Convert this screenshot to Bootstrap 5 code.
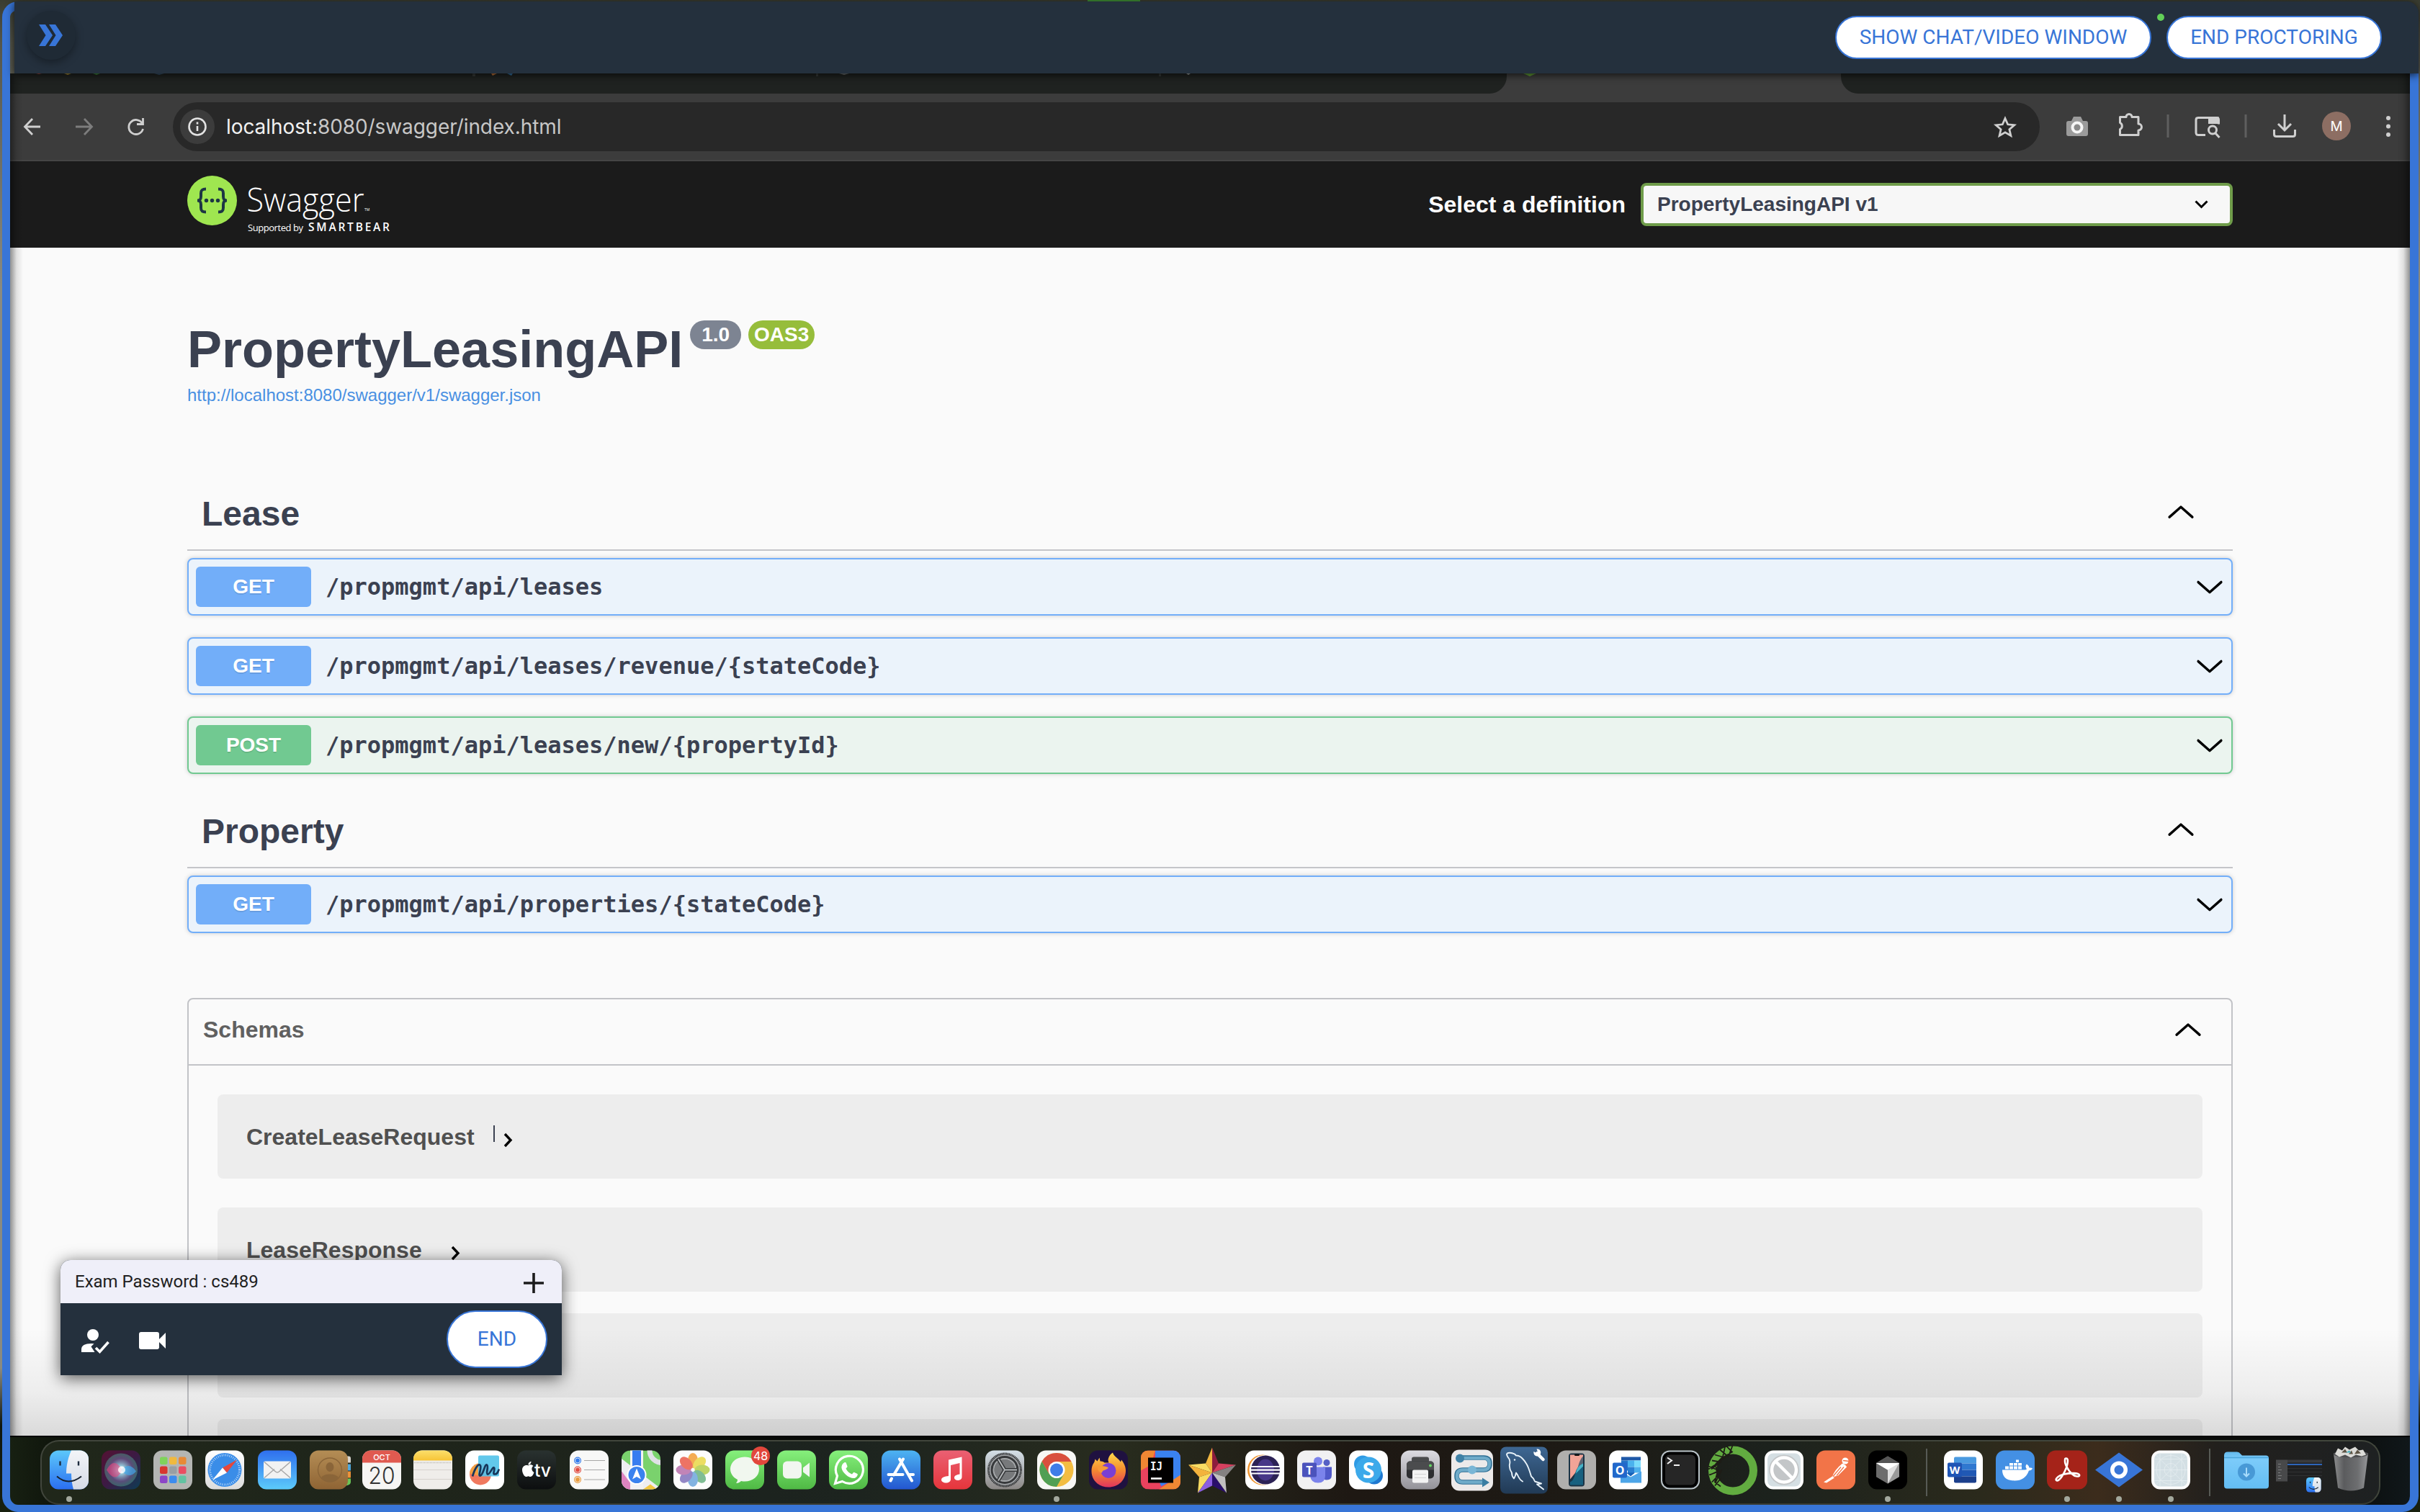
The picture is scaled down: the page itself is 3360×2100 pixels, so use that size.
<!DOCTYPE html>
<html lang="en">
<head>
<meta charset="utf-8">
<title>Swagger UI</title>
<link href="https://cdn.jsdelivr.net/npm/bootstrap@5.3.0/dist/css/bootstrap.min.css" rel="stylesheet">
<style>
body{width:3360px;height:2100px;overflow:hidden;background:#0b0f0a;font-family:"Liberation Sans",Arial,sans-serif;color:#3b4151}
svg{display:block;overflow:visible}
.screen{width:3360px;height:2100px;background:linear-gradient(#3a3d31 0,#55564b 60px,#8a8a80 400px,#8a8a80 1900px,#10160e 1980px,#18200f 2100px)}
.frame{inset:2px 2px 0 3px;border:solid #3875d7;border-width:12px 12px 10px 11px;border-radius:22px;z-index:3;pointer-events:none}
.edge{top:102px;bottom:106px;width:18px;z-index:2}
.edge-l{left:14px;background:linear-gradient(90deg,rgba(0,0,0,.42),rgba(0,0,0,.1) 50%,transparent)}
.edge-r{right:14px;background:linear-gradient(270deg,rgba(0,0,0,.42),rgba(0,0,0,.1) 50%,transparent)}
.proctor{height:100px;margin:2px 2px 0 20px;background:#24303d;border-radius:0 16px 0 0;box-shadow:0 2px 12px rgba(0,0,0,.75);z-index:5;padding:0 51px 0 17px;font-family:Roboto,sans-serif}
.expander{width:68px;height:68px;background:#1f2a35;box-shadow:0 4px 12px rgba(0,0,0,.35);margin-bottom:6px}
.pill{background:#fff;color:#3875d7;border:2px solid #3875d7;border-radius:40px;font:400 28px/54px Roboto,sans-serif;height:60px;text-align:center;white-space:nowrap;padding:0}
.camlight{width:10px;height:10px;background:#62d058;top:17px;left:2975px}
.browser{margin:0 14px}
.tabs{height:28px;background:#3c3c3c}
.tabs .off{background:#1f2220}
.toolbar{height:94px;background:#3c3c3c;border-bottom:2px solid #454545;font-family:Inter,sans-serif}
.omni{margin-left:38px;width:2592px;height:68px;border-radius:34px;background:#282828;padding:0 32px 0 10px}
.site{width:48px;height:48px;background:#3c3c3c}
.url{font-size:28px;color:#c7c7c7;margin-left:16px;white-space:nowrap;letter-spacing:-.08px}
.url b{font-weight:400;color:#f1f1f1}
.topbar{height:120px;background:#1b1b1b;padding:0 246px}
.topbar label{font-size:32px;font-weight:700;color:#fff;white-space:nowrap}
.defsel{width:822px;height:60px;border:4px solid #6f9c4a;border-radius:8px;background:#f7f7f7;font-size:28px;font-weight:700;padding:0 30px 0 19px;color:#3b4151}
.page{height:1650px;overflow:hidden;background:#fafafa;padding:105px 246px 0}
.page::after{content:"";position:absolute;left:0;right:0;bottom:0;height:150px;background:linear-gradient(transparent,rgba(0,0,0,.05) 60%,rgba(0,0,0,.13))}
h1{font-size:72px;line-height:72px;font-weight:700;margin:0}
.ver{height:40px;border-radius:57px;color:#fff;font-size:28px;line-height:40px;font-weight:700;text-align:center;margin-top:-4px}
.spec{font-size:24px;line-height:28px;color:#4990e2;margin-top:14px;text-decoration:none}
.taghead{height:100px;border-bottom:2px solid #c4c5c9;padding:0 54px 0 20px;margin-bottom:10px}
.taghead h2{font-size:48px;line-height:48px;font-weight:700;margin:0}
.op{height:80px;border:2px solid #72aef9;border-radius:8px;background:#ebf3fb;box-shadow:0 0 6px rgba(0,0,0,.19);padding:0 12px 0 10px;margin-bottom:30px}
.op .verb{width:160px;height:56px;border-radius:6px;background:#72aef9;color:#fff;font-size:28px;line-height:56px;font-weight:700;text-align:center;text-shadow:0 2px 0 rgba(0,0,0,.1)}
.op .path{font:700 32px/40px "DejaVu Sans Mono",monospace;margin-left:20px;color:#3b4151}
.op.post{border-color:#71c991;background:#ebf4ef}.op.post .verb{background:#71c991}
.schemas{margin-top:90px;border:2px solid #c2c3c7;border-radius:8px;height:900px}
.schemas .sh{height:92px;border-bottom:2px solid #c2c3c7;padding:0 42px 7px 20px;font-size:32px;font-weight:700;color:#606060}
.model{height:117px;margin:0 40px 30px;background:#ededed;border-radius:8px;padding:0 40px;font-size:32px;font-weight:700;color:#505050}
.panel{left:84px;top:1750px;width:696px;height:160px;border-radius:14px 14px 0 0;background:#24303d;box-shadow:0 4px 22px rgba(0,0,0,.65);z-index:6;overflow:visible;font-family:Roboto,sans-serif}
.panel .ph{height:60px;background:#efeff9;border-radius:14px 14px 0 0;font-size:24px;color:#212121;padding:0 25px 0 20px}
.endb{width:140px;height:80px;line-height:76px}
.dockarea{height:96px;margin:0 14px;background:linear-gradient(90deg,#172012,#0a0e08 3%,#050705 50%,#0a0c0a 97%,#10171a);padding:4px 41px 0 42px;border-top:2px solid #050605}
.dock{height:90px;border:2px solid #41463c;border-bottom-color:#393c33;border-radius:26px;background:linear-gradient(90deg,#20271a,#1e241b 22%,#1b221e 27%,#1d241f 35%,#282c1e 46%,#1e1813 56%,#1d1a15 66%,#1c221d 74%,#2b2a1c 83%,#3c2c1c 88%,#22201d 93%,#1e2122);padding-left:2px}
.dk{width:72.17px;height:86px;padding:12px 9px 0}
.dk svg{width:54px;height:55px}
.on::after{content:"";width:8px;height:8px;border-radius:50%;background:#a3a89d;position:absolute;left:32px;top:76px}
.sep{width:2px;height:66px;background:#575a55;margin-top:10px}
.cnt{left:45px;top:7px;width:26px;height:26px;line-height:26px;background:#e2473c;font-size:16px;color:#fff;font-family:Inter,sans-serif;text-align:center}
.greenbit{left:1510px;top:0;width:73px;height:2px;background:#3f8f35}
</style>
<script src="https://cdn.jsdelivr.net/npm/bootstrap@5.3.0/dist/js/bootstrap.bundle.min.js"></script>
</head>
<body>
<svg width="0" height="0" class="position-absolute" aria-hidden="true"><defs>
<path id="up" d="M2 17 18 4.500l16 12.500" fill="none" stroke="#000" stroke-width="3.200" stroke-linecap="round" stroke-linejoin="round" transform="translate(0 -2) scale(1 1.130)"/>
<path id="dn" d="M2 4 18 16.500 34 4" fill="none" stroke="#000" stroke-width="3.200" stroke-linecap="round" stroke-linejoin="round" transform="translate(0 -1) scale(1 1.130)"/>
<linearGradient id="gSky" x2="0" y2="1"><stop stop-color="#5cc8fb"/><stop offset="1" stop-color="#2b6ff0"/></linearGradient>
<linearGradient id="gFace" x2="0" y2="1"><stop stop-color="#f3f5f8"/><stop offset="1" stop-color="#d5dbe6"/></linearGradient>
<linearGradient id="gMail" x2="0" y2="1"><stop stop-color="#2f6fee"/><stop offset="1" stop-color="#5ccbfb"/></linearGradient>
<linearGradient id="gGreen" x2="0" y2="1"><stop stop-color="#86f07c"/><stop offset="1" stop-color="#4fb944"/></linearGradient>
<linearGradient id="gStore" x2="0" y2="1"><stop stop-color="#4db4f2"/><stop offset="1" stop-color="#2356d0"/></linearGradient>
<linearGradient id="gRed" x2="0" y2="1"><stop stop-color="#ea6073"/><stop offset="1" stop-color="#e6353b"/></linearGradient>
<linearGradient id="gGrey" x2="0" y2="1"><stop stop-color="#d5e0e8"/><stop offset="1" stop-color="#8b8785"/></linearGradient>
<linearGradient id="gWhite" x2="0" y2="1"><stop stop-color="#fff"/><stop offset="1" stop-color="#dcdcdc"/></linearGradient>
<linearGradient id="gYel" x2="0" y2="1"><stop stop-color="#fbdf6b"/><stop offset="1" stop-color="#f7c436"/></linearGradient>
<linearGradient id="gTv" x2="0" y2="1"><stop stop-color="#2a3230"/><stop offset="1" stop-color="#0c0e0f"/></linearGradient>
<linearGradient id="gTan" x2="0" y2="1"><stop stop-color="#b48d55"/><stop offset="1" stop-color="#8f6434"/></linearGradient>
<linearGradient id="gMy" x2="0" y2="1"><stop stop-color="#3e6793"/><stop offset="1" stop-color="#213a55"/></linearGradient>
<linearGradient id="gPrn" x2="0" y2="1"><stop stop-color="#dddce2"/><stop offset="1" stop-color="#939298"/></linearGradient>
<linearGradient id="gFold" x2="0" y2="1"><stop stop-color="#63b9ec"/><stop offset=".2" stop-color="#7ccbfa"/><stop offset="1" stop-color="#63bdf3"/></linearGradient>
<linearGradient id="gTrash" x2="1"><stop stop-color="#8d8e8f"/><stop offset=".3" stop-color="#5b5c5e"/><stop offset=".7" stop-color="#6d6e70"/><stop offset="1" stop-color="#97989a"/></linearGradient>
<linearGradient id="gFox" x2="0" y2="1"><stop stop-color="#ffd94a"/><stop offset=".5" stop-color="#f58b2f"/><stop offset="1" stop-color="#e0355d"/></linearGradient>
<linearGradient id="gSiri" x2="1" y2="1"><stop stop-color="#541233"/><stop offset=".5" stop-color="#3c1a44"/><stop offset="1" stop-color="#0d3d55"/></linearGradient>
<radialGradient id="gOrb"><stop stop-color="#fff"/><stop offset=".25" stop-color="#9dd9e8" stop-opacity=".9"/><stop offset=".7" stop-color="#6b5d8e" stop-opacity=".7"/><stop offset="1" stop-color="#4a9585" stop-opacity=".55"/></radialGradient>
</defs></svg>

<div class="screen position-relative overflow-hidden d-flex flex-column">
  <div class="frame position-absolute"></div>
  <div class="edge edge-l position-absolute"></div><div class="edge edge-r position-absolute"></div>
  <div class="greenbit position-absolute"></div>

  <header class="proctor position-relative d-flex align-items-center flex-shrink-0">
    <div class="expander rounded-circle d-flex align-items-center justify-content-center">
      <svg width="34" height="30" viewBox="0 0 34 30" fill="#3875d7"><path d="M0 0h9l10 15L9 30H0l9.500-15z"/><path d="M14 0h9l10 15-10 15h-9l9.500-15z"/></svg>
    </div>
    <button class="pill ms-auto" style="width:439px">SHOW CHAT/VIDEO WINDOW</button>
    <span class="camlight rounded-circle position-absolute"></span>
    <button class="pill" style="width:299px;margin-left:21px">END PROCTORING</button>
  </header>

  <main class="browser flex-shrink-0">
    <div class="tabs d-flex">
      <div class="off" style="width:2078px;border-radius:0 0 24px 0"><svg width="2078" height="28"><path d="M36 0h8l-4 1z" fill="#b5453c"/><path d="M75 0h10l-5 2z" fill="#a98a2e"/><path d="M115 0h10l-5 2z" fill="#3d8a38"/><path d="M200 0h14l-7 2z" fill="#36506a"/><path d="M642 0h4v4h-4zM1119 0h3v4h-3zM1595 0h3v4h-3z" fill="#363938"/><path d="M668 0h8l-6 3z" fill="#c07134"/><path d="M690 0h8l-2 3z" fill="#3473a5"/><path d="M1151 0h14l-7 2z" fill="#6d7071"/><path d="M1633 0h6l-3 2z" fill="#a5a8a6"/></svg></div>
      <div style="width:464px"><svg width="464" height="28"><path d="M23 0h18l-9 4z" fill="#5f9a35"/></svg></div>
      <div class="off flex-grow-1" style="border-radius:0 0 0 24px"></div>
    </div>
    <nav class="toolbar d-flex align-items-center">
      <svg width="170" height="28" viewBox="0 0 170 28" fill="none" stroke="#cfcfcf" stroke-width="2.800" style="margin-left:18px"><path d="M13 3 2.500 14 13 25M3 14h21"/><path d="M85 3l10.500 11L85 25M95 14H73" stroke="#7d7d7d"/><path d="M165.500 9.500A10 10 0 1 0 166.500 17M166.500 2v8.500h-8.500"/></svg>
      <div class="omni d-flex align-items-center">
        <span class="site rounded-circle d-flex align-items-center justify-content-center"><svg width="26" height="26" fill="none" stroke="#e3e3e3" stroke-width="2.600"><circle cx="13" cy="13" r="11.500"/><path d="M13 12v7M13 6.500v3"/></svg></span>
        <span class="url"><b>localhost:</b>8080/swagger/index.html</span>
        <svg class="ms-auto" width="32" height="30" viewBox="0 0 32 30" fill="none" stroke="#cfcfcf" stroke-width="2.800"><path d="M16 3.500l3.700 8.300 9 .9-6.800 6 2 8.800-7.900-4.700-7.900 4.700 2-8.800-6.800-6 9-.9z"/></svg>
      </div>
      <svg width="460" height="44" viewBox="2848 155 460 44" style="margin-left:16px" fill="none" stroke="#cfcfcf" stroke-width="3">
        <g stroke="none"><path d="M2879 163h10l3 6h4q3 0 3 3v15q0 3-3 3h-24q-3 0-3-3v-15q0-3 3-3h4z" fill="#9b9b9b"/><circle cx="2884" cy="178" r="8.500" fill="#f5f5f5"/><circle cx="2884" cy="178" r="4.500" fill="#8a8a8a"/></g>
        <path d="M2943.500 163.500h8.500a4 4 0 0 1 8 0h9v9.500a4.500 4.500 0 0 1 0 9v6.500h-25.500v-8a5 5 0 0 0 0-9z" stroke-linejoin="round"/>
        <path d="M3010 160v32M3118 160v32" stroke="#5f5f5f"/>
        <path d="M3062 188.500h-10q-3 0-3-3v-18q0-3 3-3h26q2.500 0 2.500 3v6"/><path d="M3066 163.500h15v9.500h-15z" fill="#cfcfcf" stroke="none"/><circle cx="3072" cy="181.500" r="5.500"/><path d="M3076 186l5.500 6"/>
        <path d="M3172 160v21M3163 173l9 9 9-9M3157.500 181v6.500q0 3 3 3h23q3 0 3-3v-6.500"/>
        <circle cx="3244" cy="176" r="20" fill="#8d6e63" stroke="none"/><text x="3244" y="183" font-size="19" fill="#fff" stroke="none" text-anchor="middle">M</text>
      </svg>
      <svg width="6" height="30" style="margin-left:5px" fill="#cfcfcf"><circle cx="3" cy="3" r="3"/><circle cx="3" cy="14.500" r="3"/><circle cx="3" cy="26" r="3"/></svg>
    </nav>

    <div class="topbar d-flex align-items-center">
      <svg width="284" height="80" viewBox="260 244 284 80" style="font-family:'Open Sans',sans-serif" fill="#fff">
        <circle cx="294.500" cy="278.500" r="34.500" fill="#9fe650"/>
        <g fill="none" stroke="#1d3644" stroke-width="4"><path d="M286 262.500c-6 0-7 2-7 6v4c0 4-1 6-5 6 4 0 5 2 5 6v4c0 4 1 6 7 6M303 262.500c6 0 7 2 7 6v4c0 4 1 6 5 6-4 0-5 2-5 6v4c0 4-1 6-7 6"/></g>
        <g fill="#1d3644"><circle cx="286.500" cy="278.500" r="2.700"/><circle cx="294.500" cy="278.500" r="2.700"/><circle cx="302.500" cy="278.500" r="2.700"/></g>
        <text x="342.500" y="293.500" font-size="46" font-weight="300" textLength="163" lengthAdjust="spacingAndGlyphs">Swagger</text>
        <text x="506" y="293" font-size="5">TM</text>
        <text x="344" y="321" font-size="13" textLength="77">Supported by</text>
        <text x="428" y="321" font-size="15.500" font-weight="600" textLength="113">SMARTBEAR</text>
      </svg>
      <label class="ms-auto" style="margin-right:21px">Select a definition</label>
      <div class="defsel d-flex align-items-center justify-content-between"><span>PropertyLeasingAPI v1</span>
        <svg width="19" height="12" fill="none" stroke="#000" stroke-width="3"><path d="M1.500 1.500l8 8 8-8"/></svg></div>
    </div>

    <div class="page position-relative">
      <div class="d-flex align-items-start"><h1>PropertyLeasingAPI</h1><span class="ver" style="width:71px;background:#7d8492;margin-left:10px">1.0</span><span class="ver" style="width:92px;background:#96bd3b;margin-left:10px">OAS3</span></div>
      <a class="spec d-block">http://localhost:8080/swagger/v1/swagger.json</a>

      <section style="margin-top:102px">
        <div class="taghead d-flex align-items-center justify-content-between"><h2>Lease</h2><svg width="36" height="20" style="margin-top:-6px"><use href="#up"/></svg></div>
        <div class="op d-flex align-items-center"><span class="verb">GET</span><span class="path">/propmgmt/api/leases</span><svg class="ms-auto" width="36" height="20"><use href="#dn"/></svg></div>
        <div class="op d-flex align-items-center"><span class="verb">GET</span><span class="path">/propmgmt/api/leases/revenue/{stateCode}</span><svg class="ms-auto" width="36" height="20"><use href="#dn"/></svg></div>
        <div class="op post d-flex align-items-center"><span class="verb">POST</span><span class="path">/propmgmt/api/leases/new/{propertyId}</span><svg class="ms-auto" width="36" height="20"><use href="#dn"/></svg></div>
      </section>
      <section style="margin-top:31px">
        <div class="taghead d-flex align-items-center justify-content-between"><h2>Property</h2><svg width="36" height="20" style="margin-top:-6px"><use href="#up"/></svg></div>
        <div class="op d-flex align-items-center"><span class="verb">GET</span><span class="path">/propmgmt/api/properties/{stateCode}</span><svg class="ms-auto" width="36" height="20"><use href="#dn"/></svg></div>
      </section>
      <section class="schemas">
        <div class="sh d-flex align-items-center justify-content-between"><span>Schemas</span><svg width="36" height="20"><use href="#up"/></svg></div>
        <div class="model d-flex align-items-center" style="margin-top:40px;margin-bottom:40px"><span>CreateLeaseRequest</span>
          <svg width="30" height="32" style="margin-left:25px" fill="none"><path d="M2 0v23" stroke="#3b4151" stroke-width="2"/><path d="M17 12l8 8.500-8 8.500" stroke="#000" stroke-width="3.400"/></svg></div>
        <div class="model d-flex align-items-center"><span>LeaseResponse</span>
          <svg width="30" height="32" style="margin-left:25px" fill="none"><path d="M17 12l8 8.500-8 8.500" stroke="#000" stroke-width="3.400"/></svg></div>
        <div class="model"></div>
        <div class="model"></div>
      </section>
    </div>
  </main>

  <aside class="panel position-absolute">
    <div class="ph d-flex align-items-center justify-content-between"><span>Exam Password : cs489</span><svg width="28" height="28" stroke="#1c1c1c" stroke-width="3.600" class="mt-1"><path d="M14 0v28M0 14h28"/></svg></div>
    <div class="d-flex align-items-center" style="height:100px;padding:0 20px 0 29px">
      <svg width="39" height="33" viewBox="0 0 39 33" fill="#fff" style="margin-top:4px"><circle cx="16" cy="8" r="8"/><path d="M0 32v-4q0-8 14-8 2 0 3.500.3l-4 4 5 7.700z"/><path d="M20 26l5.500 5.500L37.500 18" fill="none" stroke="#fff" stroke-width="3.600"/></svg>
      <svg width="38" height="24" viewBox="0 0 38 24" fill="#fff" style="margin-left:41px;margin-top:4px"><rect width="28" height="24" rx="3"/><path d="M28 10l9-9v22l-9-9z"/></svg>
      <button class="pill endb ms-auto">END</button>
    </div>
  </aside>

  <footer class="dockarea flex-shrink-0"><div class="dock d-flex">
    <div class="dk position-relative on"><svg viewBox="0 0 54 54"><rect width="54" height="54" rx="12" fill="url(#gSky)"/><path d="M30 0c-5 11-7 22-7 32h7c0 8 1 15 3 22h9a12 12 0 0 0 12-12V12A12 12 0 0 0 42 0z" fill="url(#gFace)"/><path d="M14.500 15v6M40 15v6" stroke="#1d2b3e" stroke-width="2.400"/><path d="M10 36q16 14 34 0" fill="none" stroke="#17222f" stroke-width="2"/></svg></div>
    <div class="dk"><svg viewBox="0 0 54 54"><rect width="54" height="54" rx="12" fill="url(#gSiri)"/><circle cx="27" cy="27" r="23" fill="url(#gOrb)"/><path d="M7 27q10-19 22 0-10 20-22 0" fill="#e8467e" opacity=".6"/><path d="M27 27q12-12 21 2-10 12-21-2" fill="#42a7e8" opacity=".7"/><circle cx="28" cy="27" r="5" fill="#fff" opacity=".8"/></svg></div>
    <div class="dk"><svg viewBox="0 0 54 54"><rect width="54" height="54" rx="12" fill="#b4b6b3"/><g><rect x="9" y="9" width="10.500" height="10.500" rx="2.500" fill="#7fd35b"/><rect x="22" y="9" width="10.500" height="10.500" rx="2.500" fill="#f0b93e"/><rect x="35" y="9" width="10.500" height="10.500" rx="2.500" fill="#e88a35"/><rect x="9" y="22" width="10.500" height="10.500" rx="2.500" fill="#d8362f"/><rect x="22" y="22" width="10.500" height="10.500" rx="2.500" fill="#999fa3"/><rect x="35" y="22" width="10.500" height="10.500" rx="2.500" fill="#ea4d62"/><rect x="9" y="35" width="10.500" height="10.500" rx="2.500" fill="#8c46c7"/><rect x="22" y="35" width="10.500" height="10.500" rx="2.500" fill="#3c8ced"/><rect x="35" y="35" width="10.500" height="10.500" rx="2.500" fill="#62c3a2"/></g></svg></div>
    <div class="dk"><svg viewBox="0 0 54 54"><rect width="54" height="54" rx="12" fill="url(#gWhite)"/><circle cx="27" cy="27" r="23.500" fill="#3a8de8"/><circle cx="27" cy="27" r="20.500" fill="none" stroke="#cfe4fa" stroke-width="3" stroke-dasharray=".8 1.900"/><path d="M44 13 30 31l-6-7z" fill="#e5473b"/><path d="M10 41l14-17 6 7z" fill="#fff"/></svg></div>
    <div class="dk"><svg viewBox="0 0 54 54"><rect width="54" height="54" rx="12" fill="url(#gMail)"/><rect x="8" y="15" width="38" height="24" rx="2" fill="#f2f2f2"/><path d="M9 38l14-12M45 38 31 26M9 16l15 13q3 3 6 0l15-13" fill="none" stroke="#a8a8a8" stroke-width="1.500"/></svg></div>
    <div class="dk"><svg viewBox="0 0 54 54"><path d="M50 8h4q3 0 3 3v6h-7z" fill="#d7d4cd"/><path d="M50 19h7v9h-7z" fill="#50a8dc"/><path d="M50 29h7v9h-7z" fill="#eb9138"/><path d="M50 39h7v5q0 4-7 5z" fill="#69c455"/><rect width="53" height="54" rx="12" fill="url(#gTan)"/><circle cx="28" cy="27" r="16.500" fill="none" stroke="#8a6539" stroke-width="1.500"/><ellipse cx="28" cy="23" rx="5.500" ry="6.500" fill="#8a6539"/><path d="M16 38q3-5 12-5t12 5q-12 11-24 0z" fill="#8a6539"/></svg></div>
    <div class="dk"><svg viewBox="0 0 54 54" style="margin-left:1px"><rect width="54" height="54" rx="12" fill="#f6f5f3"/><path d="M0 17v-5A12 12 0 0 1 12 0h30a12 12 0 0 1 12 12v5z" fill="#e05a50"/><text x="27" y="13" font-family="Inter" font-size="11" font-weight="500" fill="#fff" text-anchor="middle">OCT</text><text x="27" y="46" font-family="Inter" font-size="33" font-weight="300" fill="#333" text-anchor="middle" textLength="37" lengthAdjust="spacingAndGlyphs">20</text></svg></div>
    <div class="dk"><svg viewBox="0 0 54 54"><rect width="54" height="54" rx="12" fill="#efedea"/><path d="M0 14v-2A12 12 0 0 1 12 0h30a12 12 0 0 1 12 12v2z" fill="url(#gYel)"/><path d="M1 17h52" stroke="#bdbab4" stroke-width="1.500" stroke-dasharray="1 1"/><path d="M0 27h54M0 40h54" stroke="#d5d2cd" stroke-width="1.200"/></svg></div>
    <div class="dk"><svg viewBox="0 0 54 54"><rect width="54" height="54" rx="12" fill="#fff"/><circle cx="21" cy="33" r="15" fill="#f0795f"/><path d="M6 32a15 15 0 0 1 12-14l4 18z" fill="#f3a044"/><rect x="18" y="7" width="29" height="29" rx="2" fill="#56c4ea" opacity=".93"/><path d="M10 36c4-13 9-19 11-15s-4 15 0 14 6-17 9-15-2 12 1 13 7-11 9-9-3 9 1 9 4-3 6-7" fill="none" stroke="#17365a" stroke-width="2.700"/></svg></div>
    <div class="dk"><svg viewBox="0 0 54 54"><rect width="54" height="54" rx="12" fill="url(#gTv)"/><path d="M15.500 21c2-2 5-1.500 7 .5-3 2-3 7 1 9-1 3-3 6-5 6-1.300 0-2-.8-3-.8s-2 .8-3 .8c-3 0-5.500-6-5.500-9.500 0-5 4.500-7.500 8.500-6zM15.500 20c-.3-2.500 1.700-4.500 4-4.800.2 2.600-1.700 4.800-4 4.800z" fill="#fff"/><text x="24" y="36" font-family="Inter" font-size="25" font-weight="500" fill="#fff" textLength="23" lengthAdjust="spacingAndGlyphs">tv</text></svg></div>
    <div class="dk"><svg viewBox="0 0 54 54"><rect width="54" height="54" rx="12" fill="#f8f8f7"/><g stroke="#a7a7a7" stroke-width="1.200"><path d="M20 14h29M20 27h29M20 40.500h29"/></g><g fill="none" stroke-width="1.200"><circle cx="11" cy="14" r="4.400" stroke="#347cec"/><circle cx="11" cy="27" r="4.400" stroke="#e24b40"/><circle cx="11" cy="40.500" r="4.400" stroke="#e89a3c"/></g><circle cx="11" cy="14" r="2.900" fill="#347cec"/><circle cx="11" cy="27" r="2.900" fill="#e24b40"/><circle cx="11" cy="40.500" r="2.900" fill="#e89a3c"/></svg></div>

    <div class="dk"><svg viewBox="0 0 54 54"><clipPath id="cMap"><rect width="54" height="54" rx="12"/></clipPath><g clip-path="url(#cMap)"><rect width="54" height="54" fill="#7ad26d"/><path d="M-2 10l58 44v8H-2z" fill="#eeeef1"/><path d="M-2 26l22 30H-2z" fill="#dd84c0"/><path d="M30 54l10-7 12 9H28z" fill="#f2c63e"/><path d="M12-2h18v60H12z" fill="#f2f2f4"/><path d="M15-2h12v30H15z" fill="#377cf0"/><circle cx="56" cy="0" r="17" fill="none" stroke="#dfe1e6" stroke-width="7"/></g><circle cx="21" cy="34" r="13.500" fill="#fff"/><circle cx="21" cy="34" r="11.500" fill="#3a82ef"/><path d="M21 25l6 15-6-3.500-6 3.500z" fill="#fff"/></svg></div>
    <div class="dk"><svg viewBox="0 0 54 54"><rect width="54" height="54" rx="12" fill="#fcfcfc"/><g opacity=".88"><ellipse cx="27" cy="14" rx="7" ry="10.500" fill="#f3a13c"/><ellipse cx="27" cy="14" rx="7" ry="10.500" fill="#ead94d" transform="rotate(45 27 27)"/><ellipse cx="27" cy="14" rx="7" ry="10.500" fill="#b6cf52" transform="rotate(90 27 27)"/><ellipse cx="27" cy="14" rx="7" ry="10.500" fill="#6fb586" transform="rotate(135 27 27)"/><ellipse cx="27" cy="14" rx="7" ry="10.500" fill="#72a9de" transform="rotate(180 27 27)"/><ellipse cx="27" cy="14" rx="7" ry="10.500" fill="#8577bf" transform="rotate(225 27 27)"/><ellipse cx="27" cy="14" rx="7" ry="10.500" fill="#ba74ae" transform="rotate(270 27 27)"/><ellipse cx="27" cy="14" rx="7" ry="10.500" fill="#ec6150" transform="rotate(315 27 27)"/></g></svg></div>
    <div class="dk position-relative"><svg viewBox="0 0 54 54"><rect width="54" height="54" rx="12" fill="url(#gGreen)"/><path d="M27 9c11 0 20 7 20 17s-9 17-20 17c-2 0-3 0-5-.5-2 2-4 3-7 3 1-1.500 2-3 2-5C11 37.500 7 32 7 26 7 16 16 9 27 9z" fill="#f1f7ef"/></svg><span class="cnt position-absolute rounded-circle">48</span></div>
    <div class="dk"><svg viewBox="0 0 54 54"><rect width="54" height="54" rx="12" fill="url(#gGreen)"/><rect x="8" y="15" width="26" height="24" rx="6" fill="#f1f6f0"/><path d="M36 24l9-7v20l-9-7z" fill="#f1f6f0"/></svg></div>
    <div class="dk"><svg viewBox="0 0 54 54"><rect width="54" height="54" rx="12" fill="url(#gGreen)"/><path d="M8.500 46l3-10.500a19 19 0 1 1 7 7.500z" fill="none" stroke="#fff" stroke-width="3.200"/><path d="M21 17c1.500-.8 2.500-.3 3 1l1.500 4c.3 1-1.500 2.500-2 3.200 2 4 5 6.500 8.500 7.800.8-.8 2.200-3 3.200-2.600l4.300 2c1 .8-.2 5-4 6-6 1.500-17-7-18-14-.4-3 1.500-6.500 3.500-7.400z" fill="#fff"/></svg></div>
    <div class="dk"><svg viewBox="0 0 54 54"><rect width="54" height="54" rx="12" fill="url(#gStore)"/><g stroke="#fff" stroke-width="4" stroke-linecap="round"><path d="M30 12 17 34M25 12l17 30M9.500 33.500h20M38 33.500h6M14 39l-1.500 3"/></g></svg></div>
    <div class="dk"><svg viewBox="0 0 54 54"><rect width="54" height="54" rx="12" fill="url(#gRed)"/><path d="M21 13l18.500-4v28c0 3-3 4.500-5.500 4.500S29 40 29 38c0-3.500 4-4.500 7.500-5V17.500l-12.500 3V40c0 3.500-3 5-6.500 5S11 43 11 41c0-4 5-5 10-5.500z" fill="#fff"/></svg></div>
    <div class="dk"><svg viewBox="0 0 54 54"><rect width="54" height="54" rx="12" fill="url(#gGrey)"/><circle cx="27" cy="27" r="22.500" fill="#a4a7aa" stroke="#303234" stroke-width="3" stroke-dasharray="1.400 .7"/><circle cx="27" cy="27" r="17" fill="#77797b" stroke="#37393b" stroke-width="5"/><circle cx="27" cy="27" r="15.500" fill="none" stroke="#a7aaac" stroke-width="2"/><path d="M27 27h17M27 27l-9 15M27 27l-9-15" stroke="#323436" stroke-width="5"/><path d="M27 27h17M27 27l-9 15M27 27l-9-15" stroke="#b4b7b9" stroke-width="2"/></svg></div>
    <div class="dk position-relative on"><svg viewBox="0 0 54 54"><rect width="54" height="54" rx="12" fill="#f7f7f5"/><circle cx="27" cy="27" r="23.500" fill="#f3bd42"/><path d="M27 27 6.700 15.200A23.500 23.500 0 0 1 47.500 15.500H27z" fill="#d94f3e"/><path d="M6.700 15.200A23.500 23.500 0 0 0 27 50.500L37 33 27 27l-10 6z" fill="#519f54"/><path d="M6.700 15.200 17 33l10-6V15.500z" fill="#d94f3e"/><circle cx="27" cy="27" r="11.500" fill="#fff"/><circle cx="27" cy="27" r="9" fill="#3e7de8"/></svg></div>
    <div class="dk"><svg viewBox="0 0 54 54"><rect width="54" height="54" rx="12" fill="#1f1140"/><path d="M33 3c1 5 8 8 11 13l1-3c4 5 6 10 6 15 0 13-10 23-24 23S3.500 41 3.500 29c0-7 2-10 4-13l1-4 3 3 3-5 1 5c1 0 4 0 6 2h6l-1-3c0-4 3-9 6.500-11z" fill="url(#gFox)"/><circle cx="27" cy="28" r="10.500" fill="#7a3fd4"/><path d="M12 22c6-1 12 0 15 2-3 4-8 2-9 7-5-1-7-5-6-9z" fill="#f79a38"/></svg></div>
    <div class="dk"><svg viewBox="0 0 54 54"><clipPath id="cIj"><rect width="55" height="54" rx="10"/></clipPath><g clip-path="url(#cIj)"><rect width="55" height="54" fill="#e9425e"/><path d="M20 0h35v36L20 54z" fill="#3a82f0"/><path d="M0 0h20l-6 20L0 28z" fill="#f08733"/><path d="M14 16l16 38H12z" fill="#e9425e"/><path d="M55 34v20H25z" fill="#f08733"/></g><rect x="10" y="10" width="35" height="35" fill="#000"/><text x="13" y="27" font-family="DejaVu Sans Mono" font-size="16" font-weight="700" fill="#fff" textLength="17" lengthAdjust="spacingAndGlyphs">IJ</text><path d="M14 39h15" stroke="#fff" stroke-width="2.600"/></svg></div>
    <div class="dk"><svg viewBox="0 0 54 54"><path d="M27-4 18 18l9 13z" fill="#f3b840"/><path d="M27-4l9 22-9 13z" fill="#8d1d3d"/><path d="M-6 20l24-2 9 13z" fill="#f9dc63"/><path d="M60 20l-24-2-9 13z" fill="#d5405f"/><path d="M60 20 45 37l-18-6z" fill="#848181"/><path d="M9 37-6 20l33 11z" fill="#f3b33c"/><path d="M7 59l2-22 18-6z" fill="#f9dc63"/><path d="M27 31v18L7 59z" fill="#8b5ee0"/><path d="M27 31v18l20 10z" fill="#2b0f6b"/><path d="M27 31l18 6 2 22z" fill="#c2c0c0"/></svg></div>
    <div class="dk"><svg viewBox="0 0 54 54"><rect width="54" height="54" rx="12" fill="#fff"/><circle cx="24" cy="27" r="21" fill="#ef9632"/><circle cx="26" cy="27" r="20.500" fill="#fff"/><circle cx="28" cy="27" r="20" fill="#2c2255"/><ellipse cx="28" cy="27" rx="12" ry="15" fill="#473788"/><path d="M8 22.500h40M8 27.200h40M8 32h40" stroke="#fff" stroke-width="2.200"/></svg></div>
    <div class="dk"><svg viewBox="0 0 54 54"><rect width="54" height="54" rx="12" fill="#f1f1f2"/><circle cx="41" cy="17" r="4.500" fill="#5560c5"/><circle cx="29" cy="15" r="6" fill="#7b83eb"/><path d="M36 23h12v11q0 7-7 7-5 0-5-4z" fill="#5059c9"/><path d="M18 23h21v12q0 10-10 10T18 35z" fill="#7b83eb"/><rect x="7" y="17" width="20" height="20" rx="2" fill="#4b53bc"/><text x="17" y="33" font-family="Open Sans" font-size="16" font-weight="700" fill="#fff" text-anchor="middle">T</text></svg></div>
    <div class="dk"><svg viewBox="0 0 54 54"><rect width="54" height="54" rx="12" fill="#fff"/><circle cx="19" cy="19" r="12" fill="#2f9be5"/><circle cx="35" cy="35" r="12" fill="#1e78d0"/><circle cx="27" cy="27" r="18" fill="#3ca9ea"/><text x="27" y="38" font-family="Open Sans" font-size="30" font-weight="700" fill="#fff" text-anchor="middle">S</text></svg></div>
    <div class="dk"><svg viewBox="0 0 54 54"><rect width="54" height="54" rx="12" fill="url(#gPrn)"/><rect x="15" y="9" width="24" height="8" rx="3" fill="#4a4b4d"/><rect x="8" y="15" width="38" height="24" rx="5" fill="#2d2e30"/><path d="M8 27V20q0-5 5-5h28q5 0 5 5v7z" fill="#4b4c4e"/><circle cx="41" cy="21" r="2" fill="#65d765"/><rect x="16" y="27" width="22" height="18" rx="2" fill="#f3f3f3"/><path d="M19 33h16M19 38h16" stroke="#d4d4d4"/></svg></div>
    <div class="dk"><svg viewBox="0 0 54 54"><rect x="-2" y="-1" width="58" height="57" rx="11" fill="#eceaea"/><path d="M10 10h33q8.500 0 8.500 8.500T43 27H14q-8.500 0-8.500 8.500T14 44h29" fill="none" stroke="#2f6f94" stroke-width="6.500"/><path d="M10 10.500h33q8 0 8 8t-8 8.500H14q-8 0-8 8.500t8 8.500h29" fill="none" stroke="#6fabc9" stroke-width="4.500"/><circle cx="10" cy="11" r="6" fill="#3f81a6"/><circle cx="27" cy="27" r="6" fill="#79b6d6"/><path d="M41 38l10 6.500-10 6.500z" fill="#3a7ea3"/></svg></div>
    <div class="dk"><svg viewBox="0 0 54 54"><rect x="-6" y="-5" width="66" height="65" rx="8" fill="url(#gMy)"/><path d="M25 43q-4-2-7-9l-2-3q-1 5-3 8-3-3-3-8-4-6-3-12 1-3-.5-7Q4 9 3 6q0-2 2-2.500 4-1 9 1.500l2 2q5 0 9 4.500 5 5 8 12.500 2 5 4 12 3 2 5 7l9 3-6 1 9 7" fill="none" stroke="#e9f3fa" stroke-width="1.900" stroke-linejoin="round" stroke-linecap="round"/><circle cx="14" cy="13" r="1.200" fill="#e9f3fa"/><path d="M45 4l8.500 8.500" stroke="#fff" stroke-width="4.500" stroke-linecap="round"/><path d="M40.500 1.500a5 5 0 1 0 4-3.500l1.500 4-2 1.500z" fill="#fff"/></svg></div>
    <div class="dk"><svg viewBox="0 0 54 54"><rect width="54" height="54" rx="12" fill="#b0afad"/><rect x="16" y="4" width="22" height="46" rx="4" fill="#1b3345"/><path d="M18 6h18v12L18 40z" fill="#f2a497"/><path d="M36 8v12l-8 8q2-14 8-20z" fill="#5e6472"/><path d="M36 18Q27 22 25 32T18 44v4h18z" fill="#17607f"/><path d="M36 18Q27 22 26 32l10-10z" fill="#48b4c8"/><rect x="24" y="5" width="7" height="2.500" rx="1.200" fill="#111"/></svg></div>
    <div class="dk"><svg viewBox="0 0 54 54"><rect width="54" height="54" rx="12" fill="#fff"/><path d="M17 9h27v5H17z" fill="#1e58a8"/><path d="M17 14h9v14h-9z" fill="#2473c8"/><path d="M26 14h9v9h-9z" fill="#4bb2ee"/><path d="M35 14h9v9h-9z" fill="#7adcfc"/><path d="M26 23h9v9h-9z" fill="#2a7fd2"/><path d="M35 23h9v8h-9z" fill="#4eb0ec"/><path d="M16 29l14 8 15-8v16H16z" fill="#4da5e8"/><path d="M24 31h12l-6 5z" fill="#1662b8"/><rect x="5" y="17" width="20" height="21" rx="2" fill="#2268cb"/><text x="15" y="33.500" font-family="Open Sans" font-size="16" font-weight="700" fill="#fff" text-anchor="middle">O</text></svg></div>
    <div class="dk"><svg viewBox="0 0 54 54"><rect width="54" height="54" rx="12" fill="#b9c3c8"/><rect x="2" y="2" width="50" height="50" rx="10" fill="#000"/><rect x="6" y="6" width="42" height="42" rx="6" fill="#262626"/><path d="M9 10l6 4-6 4.500M18 20.500h8" fill="none" stroke="#f2f2f2" stroke-width="2"/></svg></div>
    <div class="dk"><svg viewBox="0 0 54 54"><circle cx="28" cy="28" r="28.500" fill="none" stroke="#62ac40" stroke-width="11"/><g stroke="#1e1c16" stroke-width="1.800" fill="none"><path d="M28-8 22 8M19-6l8 8-13 8M10-1l12 10M3 6l14 4-11 7M-1 14l12 2-13 10M-6 22l15 6-13 6M-5 34l17-6-8 16M-1 44l10-11M-6 26l14-9M3 49l8-10 M17-5l-3 14-10 10 2 13-3 12 8 6"/></g></svg></div>
    <div class="dk"><svg viewBox="0 0 54 54"><rect width="54" height="54" rx="12" fill="#fff"/><rect x="4" y="4" width="46" height="46" rx="8" fill="#d5dfe3"/><circle cx="27" cy="27" r="21" fill="#c3c6c8"/><circle cx="27" cy="27" r="17" fill="none" stroke="#fff" stroke-width="4.500"/><path d="M15 15l24 24" stroke="#fff" stroke-width="4.500"/></svg></div>
    <div class="dk"><svg viewBox="0 0 54 54"><rect width="54" height="54" rx="12" fill="#f27448"/><circle cx="40" cy="14.500" r="4.500" fill="#fff"/><path d="M36 18q5 2 6 5l-12 12-8 2q2-9 14-19zM22 36l3 2-11 7-4-1z" fill="#fff"/><path d="M23 36l11-13M28 35l10-12M37 14l8 1" stroke="#f27448" stroke-width="1.300"/></svg></div>
    <div class="dk position-relative on"><svg viewBox="0 0 54 54"><rect width="54" height="54" rx="12" fill="#000"/><path d="M27 8l16 9.500v19L27 46 11 36.500v-19z" fill="#888"/><path d="M27 8l16 9.500H11z" fill="#555"/><path d="M11 17.500 27 27v19L11 36.500z" fill="#6c6c6c"/><path d="M43 17.500v19L27 46z" fill="#9a9a9a"/><path d="M11 17.500h32L27 46V27z" fill="#dedede"/><path d="M11 17.500h32L27 27z" fill="#fff"/></svg></div>

    <div class="sep" style="margin-left:16px;margin-right:14px"></div>
    <div class="dk"><svg viewBox="0 0 54 54"><rect width="54" height="54" rx="12" fill="#fff"/><path d="M14 11q0-2 2-2h27q2 0 2 2v7H14z" fill="#4a9ae0"/><path d="M14 18h31v9H14z" fill="#2f78d0"/><path d="M14 27h31v9H14z" fill="#2058b4"/><path d="M14 36h31v7q0 2-2 2H16q-2 0-2-2z" fill="#1b3f8c"/><rect x="5" y="17" width="20" height="20" rx="2" fill="#1f55b5"/><text x="15" y="32.500" font-family="Open Sans" font-size="15" font-weight="700" fill="#fff" text-anchor="middle">W</text></svg></div>
    <div class="dk"><svg viewBox="0 0 54 54"><rect width="54" height="54" rx="12" fill="#4490e4"/><path d="M9 27h31q2 0 3-1-3-4 0-7 3 2 3.500 5 3-.5 4.500 1-1.500 3-5 3-5 14-20 14C14 42 9 36 9 27z" fill="#fff"/><path d="M13 22h5v4h-5zM19 22h5v4h-5zM25 22h5v4h-5zM31 22h5v4h-5zM19 17.500h5v3.500h-5zM25 17.500h5v3.500h-5zM31 17.500h5v3.500h-5zM28 13h4v3.500h-4z" fill="#fff"/></svg></div>
    <div class="dk position-relative on"><svg viewBox="0 0 54 54"><rect x="-1" width="56" height="54" rx="12" fill="#a52319"/><path d="M26 11c3 0 2 7 0 13-3 8-9 18-13 18-4-1 1-7 10-9s20-2 21 1-6 3-11-2-9-13-9-17 0-4 2-4z" fill="none" stroke="#fff" stroke-width="2.600"/></svg></div>
    <div class="dk position-relative on"><svg viewBox="0 0 54 54"><path d="M27 3 60 27 27 51-6 27z" fill="#3875d7"/><circle cx="27" cy="27" r="12" fill="#fff"/><circle cx="27" cy="27" r="6.500" fill="#3875d7"/></svg></div>
    <div class="dk position-relative on"><svg viewBox="0 0 54 54"><rect width="54" height="54" rx="12" fill="#fcfcfc"/><rect x="4" y="4" width="46" height="46" rx="8" fill="#d3dfe4"/><g fill="none" stroke="#e6edf0" stroke-width=".8"><circle cx="27" cy="27" r="20"/><circle cx="27" cy="27" r="9"/><path d="M4 27h46M27 4v46M6 6l42 42M48 6 6 48M12 4v46M42 4v46M4 12h46M4 42h46"/></g></svg></div>
    <div class="sep" style="margin-left:17px;margin-right:14px"></div>
    <div class="dk"><svg viewBox="0 0 54 54" style="margin-left:1px"><path d="M-5 7q0-5 5-5h13q3 0 5 3l2 2h33q4 0 4 4v38q0 4-4 4H-1q-4 0-4-4z" fill="url(#gFold)"/><path d="M-5 10h62" stroke="#4ba6dc" stroke-width="1.500"/><circle cx="26" cy="30" r="12" fill="#4899d6"/><path d="M26 24v12M22 32l4 4 4-4" fill="none" stroke="#a8dcfb" stroke-width="2"/></svg></div>
    <div class="dk"><svg viewBox="0 0 54 54"><path d="M-5 13h64v30H-5z" fill="#202122"/><path d="M-5 13h16v30H-5z" fill="#48494a"/><path d="M11 13h48v4H11z" fill="#3a3b3c"/><path d="M11 19.500h48" stroke="#2d64b8" stroke-width="2"/><path d="M-2 19h4M-2 23h3M-2 27h5M-2 31h3M-2 35h5M-2 39h4" stroke="#7d7e7f" stroke-width="1"/><path d="M11 25h48M11 30h48M11 35h48" stroke="#303132"/><g transform="translate(37 37.500) scale(.38)"><rect width="54" height="54" rx="12" fill="url(#gSky)"/><path d="M30 0c-5 11-7 22-7 32h7c0 8 1 15 3 22h9a12 12 0 0 0 12-12V12A12 12 0 0 0 42 0z" fill="url(#gFace)"/><path d="M14.500 15v6M40 15v6M10 36q16 14 34 0" fill="none" stroke="#17222f" stroke-width="3"/></g></svg></div>
    <div class="dk"><svg viewBox="0 0 54 54"><path d="M3 4h48l-6 48q-18 8-36 0z" fill="url(#gTrash)"/><ellipse cx="27" cy="5" rx="24" ry="5" fill="#4d4e50"/><path d="M5 5l4-8 6 3 4-5 6 4 8-4 5 5 6-1 4 7-6 2-8-2-7 4-8-4-8 3z" fill="#dcdcd8"/><path d="M14 3l5-5 3 5zM32 5l4-6 5 5zM24 5l4-5 2 5z" fill="#5c5344"/><path d="M20 3l5-3 2 3z" fill="#46aebc"/></svg></div>
  </div></footer>
</div>
</body>
</html>
